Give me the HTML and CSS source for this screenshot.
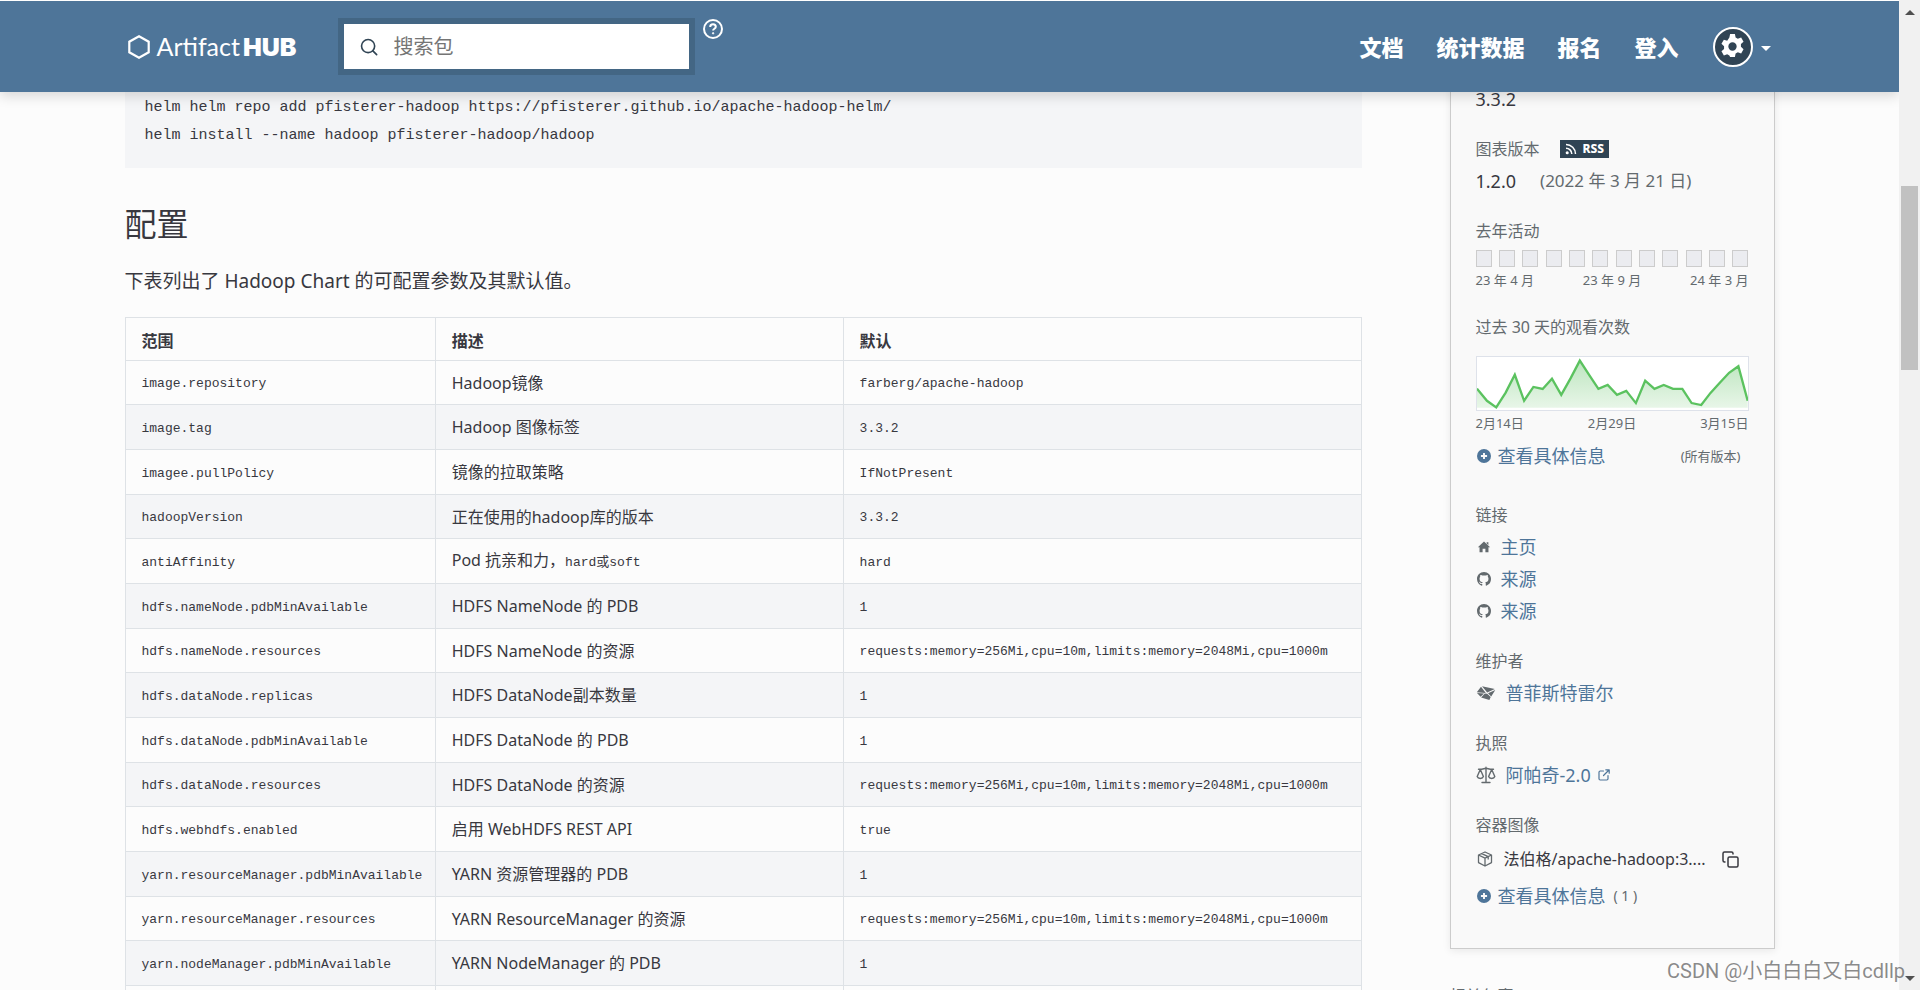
FILE: index.html
```
<!DOCTYPE html>
<html lang="zh-CN">
<head>
<meta charset="utf-8">
<title>Artifact Hub</title>
<link rel="stylesheet" href="styles.css">
</head>
<body>
<div class="app">
  <div class="page">
    <header class="header">
      <div class="container header-inner">
        <a class="logo" href="#">
          <svg class="logo-mark" viewBox="0 0 22 24" fill="none" stroke="currentColor" stroke-width="2.2"><path d="M11 1.3 20.7 6.7V17.3L11 22.7 1.3 17.3V6.7Z"/></svg>
          <span class="logo-text">Artifact<b>HUB</b></span>
        </a>
        <form class="search">
          <label for="q" aria-label="搜索包"><svg class="search-icon" viewBox="0 0 20 20" fill="none" stroke="currentColor" stroke-width="1.8" stroke-linecap="round"><circle cx="9" cy="9" r="7.3"/><path d="m14.3 14.3 4.2 4.2"/></svg></label>
          <input id="q" type="text" placeholder="搜索包">
        </form>
        <button class="help" aria-label="帮助">
          <svg viewBox="0 0 20 20" fill="none" stroke="currentColor" stroke-width="2"><circle cx="10" cy="10" r="9"/><path d="M7.2 8c0-1.700 1.200-2.700 2.800-2.700s2.800 1 2.800 2.500c0 2-2.700 1.900-2.700 3.800"/><circle cx="10.100" cy="14.300" r=".7" fill="currentColor" stroke-width="1"/></svg>
        </button>
        <nav class="nav">
          <a href="#">文档</a>
          <a href="#">统计数据</a>
          <a href="#">报名</a>
          <a href="#">登入</a>
        </nav>
        <button class="settings" aria-label="设置">
          <span class="gear">
            <svg viewBox="0 0 24 24" fill="currentColor"><path fill-rule="evenodd" d="M9.700 0h4.600l.7 3.300 2.100 1.200 3.200-1.100 2.300 4-2.500 2.300v2.600l2.500 2.300-2.300 4-3.200-1.100-2.100 1.200-.7 3.300H9.700L9 20.700l-2.100-1.200-3.200 1.100-2.300-4 2.500-2.300v-2.600L1.400 9.400l2.300-4 3.200 1.100L9 3.300ZM12 8a4 4 0 1 0 0 8 4 4 0 0 0 0-8Z"/></svg>
          </span>
          <span class="caret"></span>
        </button>
      </div>
    </header>

    <div class="container content">
      <main class="docs">
<pre class="code-block">helm helm repo add pfisterer-hadoop https://pfisterer.github.io/apache-hadoop-helm/
helm install --name hadoop pfisterer-hadoop/hadoop</pre>
        <h2>配置</h2>
        <p>下表列出了 Hadoop Chart 的可配置参数及其默认值。</p>
        <table class="params">
          <colgroup><col class="col-name"><col class="col-desc"><col></colgroup>
          <thead><tr><th>范围</th><th>描述</th><th>默认</th></tr></thead>
          <tbody>
            <tr><td><code>image.repository</code></td><td>Hadoop镜像</td><td><code>farberg/apache-hadoop</code></td></tr>
            <tr><td><code>image.tag</code></td><td>Hadoop 图像标签</td><td><code>3.3.2</code></td></tr>
            <tr><td><code>imagee.pullPolicy</code></td><td>镜像的拉取策略</td><td><code>IfNotPresent</code></td></tr>
            <tr><td><code>hadoopVersion</code></td><td>正在使用的hadoop库的版本</td><td><code>3.3.2</code></td></tr>
            <tr><td><code>antiAffinity</code></td><td>Pod 抗亲和力，<code>hard或soft</code></td><td><code>hard</code></td></tr>
            <tr><td><code>hdfs.nameNode.pdbMinAvailable</code></td><td>HDFS NameNode 的 PDB</td><td><code>1</code></td></tr>
            <tr><td><code>hdfs.nameNode.resources</code></td><td>HDFS NameNode 的资源</td><td><code>requests:memory=256Mi,cpu=10m,limits:memory=2048Mi,cpu=1000m</code></td></tr>
            <tr><td><code>hdfs.dataNode.replicas</code></td><td>HDFS DataNode副本数量</td><td><code>1</code></td></tr>
            <tr><td><code>hdfs.dataNode.pdbMinAvailable</code></td><td>HDFS DataNode 的 PDB</td><td><code>1</code></td></tr>
            <tr><td><code>hdfs.dataNode.resources</code></td><td>HDFS DataNode 的资源</td><td><code>requests:memory=256Mi,cpu=10m,limits:memory=2048Mi,cpu=1000m</code></td></tr>
            <tr><td><code>hdfs.webhdfs.enabled</code></td><td>启用 WebHDFS REST API</td><td><code>true</code></td></tr>
            <tr><td><code>yarn.resourceManager.pdbMinAvailable</code></td><td>YARN 资源管理器的 PDB</td><td><code>1</code></td></tr>
            <tr><td><code>yarn.resourceManager.resources</code></td><td>YARN ResourceManager 的资源</td><td><code>requests:memory=256Mi,cpu=10m,limits:memory=2048Mi,cpu=1000m</code></td></tr>
            <tr><td><code>yarn.nodeManager.pdbMinAvailable</code></td><td>YARN NodeManager 的 PDB</td><td><code>1</code></td></tr>
            <tr><td></td><td></td><td></td></tr>
          </tbody>
        </table>
      </main>

      <aside class="side">
        <div class="panel">
          <section>
            <div class="row version">3.3.2</div>
          </section>
          <section>
            <h3>图表版本 <a class="rss" href="#"><svg viewBox="0 0 12 12" fill="none" stroke="currentColor" stroke-width="1.500"><circle cx="2.200" cy="9.800" r=".8" fill="currentColor"/><path d="M1 5.200a5.800 5.800 0 0 1 5.800 5.800M1 1.500A9.500 9.500 0 0 1 10.500 11"/></svg>RSS</a></h3>
            <div class="row spaced"><span class="version">1.2.0</span><span class="date">(2022 年 3 月 21 日)</span></div>
          </section>
          <section class="activity">
            <h3>去年活动</h3>
            <div class="months"><i></i><i></i><i></i><i></i><i></i><i></i><i></i><i></i><i></i><i></i><i></i><i></i></div>
            <div class="axis"><span>23 年 4 月</span><span>23 年 9 月</span><span>24 年 3 月</span></div>
          </section>
          <section class="views">
            <h3>过去 30 天的观看次数</h3>
            <svg class="chart" viewBox="109 440 817 161" preserveAspectRatio="none">
              <defs><linearGradient id="fade" x1="0" y1="0" x2="0" y2="1"><stop offset="0" stop-color="#bde5bf"/><stop offset="1" stop-color="#e8f6e8"/></linearGradient></defs>
              <path fill="url(#fade)" d="M109 594V536L139 573 167 593 195 549 223 494 251 573 279 531 307 537 335 506 363 555 391 505 419 451 447 494 475 537 503 525 531 555 559 543 588 580 616 512 644 537 672 525 700 537 728 537 756 580 785 586 813 549 841 518 869 488 897 468 925 573V594Z"/>
              <polyline fill="none" stroke="#5bc25f" stroke-width="7" points="109,536 139,573 167,593 195,549 223,494 251,573 279,531 307,537 335,506 363,555 391,505 419,451 447,494 475,537 503,525 531,555 559,543 588,580 616,512 644,537 672,525 700,537 728,537 756,580 785,586 813,549 841,518 869,488 897,468 925,573"/>
            </svg>
            <div class="axis"><span>2月14日</span><span>2月29日</span><span>3月15日</span></div>
            <div class="row more"><a href="#"><svg class="plus" viewBox="0 0 16 16"><circle cx="8" cy="8" r="8" fill="currentColor"/><path d="M8 4.500v7M4.500 8h7" stroke="#f9f9f9" stroke-width="2.200"/></svg>查看具体信息</a><small class="all">(所有版本)</small></div>
          </section>
          <section>
            <h3>链接</h3>
            <div class="row"><svg class="ico14" viewBox="0 0 16 16" fill="currentColor"><path d="M8 1.800 15 8.300h-1.900V14H9.600V10H6.400v4H2.900V8.300H1L8 1.800ZM11 2.600h2v3l-2-1.800Z"/></svg><a href="#">主页</a></div>
            <div class="row"><svg class="ico14" viewBox="0 0 16 16" fill="currentColor"><path d="M8 0C3.580 0 0 3.580 0 8c0 3.540 2.290 6.530 5.470 7.590.4.070.55-.17.55-.38 0-.19-.01-.82-.01-1.490-2.010.37-2.530-.49-2.690-.94-.09-.23-.48-.94-.82-1.130-.28-.15-.68-.52-.01-.53.63-.01 1.080.58 1.230.82.72 1.210 1.870.87 2.330.66.070-.52.28-.87.51-1.070-1.780-.2-3.640-.89-3.640-3.950 0-.87.31-1.590.82-2.150-.08-.2-.36-1.020.08-2.120 0 0 .67-.21 2.200.82.64-.18 1.320-.27 2-.27s1.360.09 2 .27c1.530-1.040 2.200-.82 2.200-.82.44 1.100.16 1.920.08 2.120.51.56.82 1.270.82 2.150 0 3.070-1.870 3.750-3.650 3.950.29.25.54.73.54 1.480 0 1.070-.01 1.930-.01 2.200 0 .21.15.46.55.38A8.010 8.010 0 0 0 16 8c0-4.420-3.580-8-8-8Z"/></svg><a href="#">来源</a></div>
            <div class="row"><svg class="ico14" viewBox="0 0 16 16" fill="currentColor"><path d="M8 0C3.580 0 0 3.580 0 8c0 3.540 2.290 6.530 5.470 7.590.4.070.55-.17.55-.38 0-.19-.01-.82-.01-1.490-2.010.37-2.530-.49-2.690-.94-.09-.23-.48-.94-.82-1.130-.28-.15-.68-.52-.01-.53.63-.01 1.080.58 1.230.82.72 1.210 1.870.87 2.330.66.070-.52.28-.87.51-1.070-1.780-.2-3.640-.89-3.640-3.950 0-.87.31-1.590.82-2.150-.08-.2-.36-1.020.08-2.120 0 0 .67-.21 2.200.82.64-.18 1.320-.27 2-.27s1.360.09 2 .27c1.530-1.040 2.200-.82 2.200-.82.44 1.100.16 1.920.08 2.120.51.56.82 1.270.82 2.150 0 3.070-1.870 3.750-3.650 3.950.29.25.54.73.54 1.480 0 1.070-.01 1.930-.01 2.200 0 .21.15.46.55.38A8.010 8.010 0 0 0 16 8c0-4.420-3.580-8-8-8Z"/></svg><a href="#">来源</a></div>
          </section>
          <section>
            <h3>维护者</h3>
            <div class="row"><svg class="ico20" viewBox="0 0 20 20" fill="currentColor"><path d="M6 3.300 18.800 6 11.200 9.500ZM5 3.800 9.800 9.900 .8 9.200ZM19.300 6.900 15.200 13.500 12 10.300ZM1 10 8 10.500 4.600 13.800ZM8.800 10.600 11.200 10.800 14.700 14.100 13.400 17 5.100 14.400Z"/></svg><a href="#">普菲斯特雷尔</a></div>
          </section>
          <section>
            <h3>执照</h3>
            <div class="row"><svg class="ico20" viewBox="0 0 20 20" fill="none" stroke="currentColor" stroke-width="1.400" stroke-linecap="round" stroke-linejoin="round"><path d="M10 2.200V17.300M6 17.500h8M2.500 4.200h3.200L10 3.200l4.300 1h3.200M4.300 4.500 1.200 11.500a3.200 2.600 0 0 0 6.200 0ZM15.700 4.500 12.600 11.500a3.200 2.600 0 0 0 6.200 0Z"/></svg><a href="#">阿帕奇-2.0<svg class="ext" viewBox="0 0 12 12" fill="none" stroke="currentColor" stroke-width="1.200" stroke-linecap="round" stroke-linejoin="round"><path d="M5.500 2H2.200Q1 2 1 3.200V9.800Q1 11 2.200 11H8.800Q10 11 10 9.800V6.500M7.800 .8h3.400v3.400M11 1 5.500 6.500"/></svg></a></div>
          </section>
          <section>
            <h3>容器图像</h3>
            <div class="row image"><svg class="ico16" viewBox="0 0 16 16" fill="none" stroke="currentColor" stroke-width="1.300" stroke-linejoin="round"><path d="M8 1 14.500 4v7.600L8 15 1.500 11.600V4ZM1.500 4 8 7.200 14.500 4M8 7.200V15M4.700 2.600 11.200 5.700V8.500"/></svg><span class="image-name">法伯格/apache-hadoop:3....</span><button class="copy" aria-label="复制"><svg viewBox="0 0 17 17" fill="none" stroke="currentColor" stroke-width="1.500"><rect x="6" y="6" width="10" height="10" rx="1.500"/><path d="M3.500 11H2.500Q1 11 1 9.500V2.500Q1 1 2.500 1H9.500Q11 1 11 2.500V3.500"/></svg></button></div>
            <div class="row count"><a href="#"><svg class="plus" viewBox="0 0 16 16"><circle cx="8" cy="8" r="8" fill="currentColor"/><path d="M8 4.500v7M4.500 8h7" stroke="#f9f9f9" stroke-width="2.200"/></svg>查看具体信息</a><small>( 1 )</small></div>
          </section>
        </div>
        <h3 class="related">相关包裹</h3>
      </aside>
    </div>
  </div>
  <div class="scrollbar" aria-hidden="true"><span class="up"></span><span class="thumb"></span><span class="down"></span></div>
  <div class="watermark">CSDN @小白白白又白cdllp</div>
</div>
</body>
</html>
```
FILE: styles.css
```
* { box-sizing: border-box; }

body {
  margin: 0;
  background: #fcfcfc;
  color: #38383f;
  font: 16px/24px "Noto Sans", "Noto Sans CJK SC", sans-serif;
}

a { color: #4e7599; text-decoration: none; }
button { border: 0; padding: 0; background: none; font: inherit; color: inherit; }
svg { display: block; flex: none; }
h2, h3, p { margin: 0; font-weight: 400; }

.app {
  position: relative;
  display: grid;
  grid-template-columns: minmax(0, 1fr) 21px;
  height: 100vh;
  overflow: hidden;
}
.page { overflow: hidden; height: 100vh; border-top: 1px solid #fff; }
.container { max-width: 1698px; margin: 0 auto; padding: 0 24px; }

/* header */
.header {
  position: relative;
  z-index: 2;
  background: #4e7599;
  box-shadow: 0 4px 12px rgba(0, 0, 0, .15);
}
.header-inner { display: flex; align-items: center; height: 91px; }
.logo { display: flex; align-items: center; gap: 7px; flex: none; width: 176px; margin-left: 3px; color: #fff; }
.logo-mark { width: 22px; height: 24px; }
.logo-text { font: 400 25px/32px Lato, sans-serif; white-space: nowrap; }
.logo-text b { margin-left: 3px; font-family: Inter, sans-serif; font-weight: 900; }
.search {
  display: flex;
  align-items: center;
  flex: 0 1 357px;
  height: 57px;
  margin-left: 34px;
  border: 6px solid #436684;
  background: #fff;
}
.search label { padding: 0 16px; color: #304454; }
.search-icon { width: 18px; height: 18px; }
.search input {
  flex: 1;
  min-width: 0;
  border: 0;
  padding: 0;
  outline: 0;
  background: none;
  font: 20px/32px "Noto Sans", "Noto Sans CJK SC", sans-serif;
}
.search input::placeholder { color: #757575; }
.help { align-self: flex-start; margin: 18px 0 0 8px; color: #fff; }
.help svg { width: 20px; height: 20px; }
.nav { display: flex; gap: 33px; margin-left: auto; }
.nav a { color: #fff; font-size: 22px; line-height: 32px; font-weight: 900; }
.settings { display: flex; align-items: center; gap: 8px; margin: 0 4px 0 34px; color: #fff; }
.gear {
  display: grid;
  place-items: center;
  width: 40px;
  height: 40px;
  border: 2px solid #fff;
  border-radius: 50%;
  background: #304454;
}
.gear svg { width: 25px; height: 25px; }
.caret { margin-top: 4px; border: 5px solid transparent; border-top-color: #fff; border-bottom: 0; }

/* documentation */
.content { display: flex; gap: 88px; align-items: flex-start; }
.docs { flex: 1; min-width: 0; margin-top: -15px; }
.code-block {
  margin: 0;
  padding: 17px 20px 18px;
  background: #f4f5f7;
  font: 15px/28px "Liberation Mono", monospace;
}
.docs h2 { margin-top: 32px; font-size: 32px; line-height: 48px; }
.docs p { margin: 17px 0 20px; font-size: 19px; line-height: 32px; }
.params { width: 100%; table-layout: fixed; border-collapse: collapse; }
.col-name { width: 25.1%; }
.col-desc { width: 33%; }
.params th, .params td {
  height: 45px;
  padding: 0 16px;
  border: 1px solid #dee2e6;
  text-align: left;
  white-space: nowrap;
}
.params tr:nth-child(3n+1) td { height: 44px; }
.params th { height: 43px; padding-top: 4px; }
.params tbody tr:nth-child(even) { background: #f4f5f7; }
.params code { font: 13px/24px "Liberation Mono", "Noto Sans CJK SC", monospace; }

/* package details */
.side { flex: none; width: 325px; margin-top: -40px; }
.panel {
  display: flex;
  flex-direction: column;
  gap: 22px;
  padding: 30px 25px 36px;
  border: 1px solid #ccc;
  background: #f9f9f9;
  box-shadow: 0 2px 8px rgba(0, 0, 0, .08);
}
.side h3 { display: flex; align-items: center; color: #636a6e; font-size: 16px; line-height: 24px; }
.row { display: flex; align-items: center; gap: 10px; height: 32px; }
h3 + .row { margin-top: 4px; }
.row svg { color: #636a6e; }
.row a { display: flex; align-items: center; font-size: 18px; line-height: 32px; }
.row a svg { color: inherit; }
.version { font-size: 18px; }
.spaced { gap: 24px; }
.date { color: #636a6e; font-size: 17px; }
.rss {
  display: flex;
  align-items: center;
  gap: 6px;
  margin-left: 20px;
  padding: 0 5px;
  background: #304454;
  color: #fff;
  font-size: 12px;
  line-height: 18px;
  font-weight: 800;
}
.rss svg { width: 12px; height: 12px; }
.months { display: flex; justify-content: space-between; margin: 7px 0 3px; }
.months i { width: 16px; height: 17px; border: 1px solid #ccc; background: #ebecf0; }
.axis { display: flex; justify-content: space-between; color: #636a6e; font-size: 13px; line-height: 20px; }
.views { margin-top: 3px; }
.chart { width: 100%; height: 55px; margin: 17px 0 2px; border: 1px solid #dee2ea; background: #fff; }
.more { margin: 7px 0 9px; justify-content: space-between; }
.row small { color: #636a6e; font-size: 13px; }
.more .all { margin-right: 8px; }
.plus { width: 14px; height: 14px; margin: 0 7px 0 1px; }
.ico14 { width: 14px; height: 14px; margin-left: 1px; }
.ico16 { width: 16px; height: 16px; margin-left: 1px; }
.ico20 { width: 20px; height: 20px; }
.ext { width: 12px; height: 12px; margin-left: 7px; }
h3 + .image { margin: 6px 0 5px; gap: 11px; }
.image-name { flex: 1; white-space: nowrap; }
.copy { margin-right: 10px; }
.copy svg { width: 17px; height: 17px; color: #38383f; }
.row.count { gap: 8px; }
.count small { font-size: 14px; }
.side .related { margin-top: 35px; }

/* window scrollbar */
.scrollbar {
  display: flex;
  flex-direction: column;
  align-items: center;
  padding: 10px 2px 9px;
  background: #f1f1f1;
}
.up, .down { border: 5px solid transparent; }
.up { border-top: 0; border-bottom-color: #505050; }
.down { margin-top: auto; border-bottom: 0; border-top-color: #505050; }
.thumb { width: 17px; height: 19%; margin-top: 171px; background: #c1c1c1; }

.watermark {
  position: absolute;
  right: 15px;
  bottom: 3px;
  color: rgba(100, 100, 100, .75);
  font: 20px/32px Roboto, "Noto Sans CJK SC", sans-serif;
}
```
